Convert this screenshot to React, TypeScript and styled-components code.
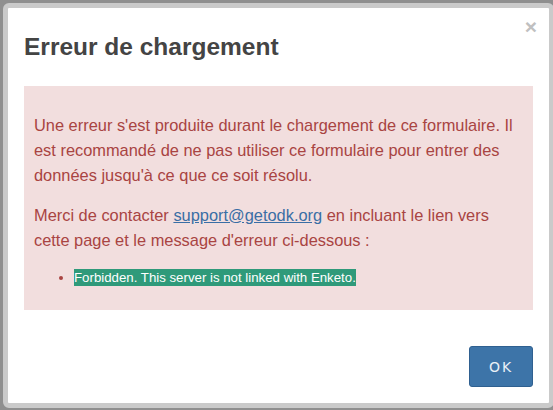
import styled, { createGlobalStyle } from "styled-components";

const GlobalStyle = createGlobalStyle`
  html, body {
    margin: 0;
    padding: 0;
    height: 100%;
    overflow: hidden;
    background: #8f8f8f;
  }
  body {
    font-family: "Liberation Sans", Arial, sans-serif;
  }
`;

const Backdrop = styled.div`
  padding: 3px 0 0 3px;
  box-sizing: border-box;
  height: 410px;
`;

const Modal = styled.div`
  box-sizing: border-box;
  width: 551px;
  height: 405px;
  border: 5px solid #cacaca;
  border-radius: 6px;
  background: #ffffff;
  display: flex;
  flex-direction: column;
`;

const Header = styled.div`
  display: flex;
  justify-content: space-between;
  align-items: flex-start;
  padding: 0 12px 0 16px;
`;

const Title = styled.h3`
  margin: 25px 0 0 0;
  font-size: 24.5px;
  line-height: 27.5px;
  font-weight: bold;
  color: #444444;
`;

const Close = styled.button`
  margin-top: 8px;
  padding: 0;
  border: none;
  background: none;
  font-family: "Liberation Sans", Arial, sans-serif;
  font-size: 21px;
  font-weight: bold;
  line-height: 21px;
  color: #c0c0c0;
  cursor: pointer;
`;

const Body = styled.div`
  padding: 25px 16px 0 16px;
`;

const Alert = styled.div`
  background: #f2dede;
  color: #a94442;
  padding: 27px 10px 23px 10px;
  font-size: 16.4px;
  line-height: 25px;
`;

const Para = styled.p<{ $first?: boolean }>`
  margin: ${(p) => (p.$first ? "0" : "15px 0 0 0")};
`;

const Link = styled.a`
  color: #3a6ea5;
  text-decoration: underline;
`;

const ErrorList = styled.ul`
  margin: 16px 0 0 0;
  padding-left: 40px;
  font-size: 13.25px;
  line-height: 18px;
`;

const ErrorItem = styled.li`
  color: #a94442;
`;

const Highlight = styled.span`
  background: #2f9a7a;
  color: #ffffff;
  padding: 1px 0;
`;

const Footer = styled.div`
  margin-top: auto;
  display: flex;
  justify-content: flex-end;
  padding: 0 16px 16px 16px;
`;

const OkButton = styled.button`
  width: 64px;
  height: 41px;
  background: #3d74a8;
  border: 1px solid #2f6090;
  border-radius: 3px;
  color: #e9eff6;
  font-family: "DejaVu Sans", "Liberation Sans", sans-serif;
  font-size: 14px;
  letter-spacing: 2px;
  cursor: pointer;
`;

export default function App() {
  return (
    <>
      <GlobalStyle />
      <Backdrop>
        <Modal>
          <Header>
            <Title>Erreur de chargement</Title>
            <Close aria-label="Fermer">×</Close>
          </Header>
          <Body>
            <Alert>
              <Para $first>
                Une erreur s'est produite durant le chargement de ce formulaire. Il
                est recommandé de ne pas utiliser ce formulaire pour entrer des
                données jusqu'à ce que ce soit résolu.
              </Para>
              <Para>
                Merci de contacter <Link href="#">support@getodk.org</Link> en
                incluant le lien vers cette page et le message d'erreur ci-dessous :
              </Para>
              <ErrorList>
                <ErrorItem>
                  <Highlight>Forbidden. This server is not linked with Enketo.</Highlight>
                </ErrorItem>
              </ErrorList>
            </Alert>
          </Body>
          <Footer>
            <OkButton>OK</OkButton>
          </Footer>
        </Modal>
      </Backdrop>
    </>
  );
}
